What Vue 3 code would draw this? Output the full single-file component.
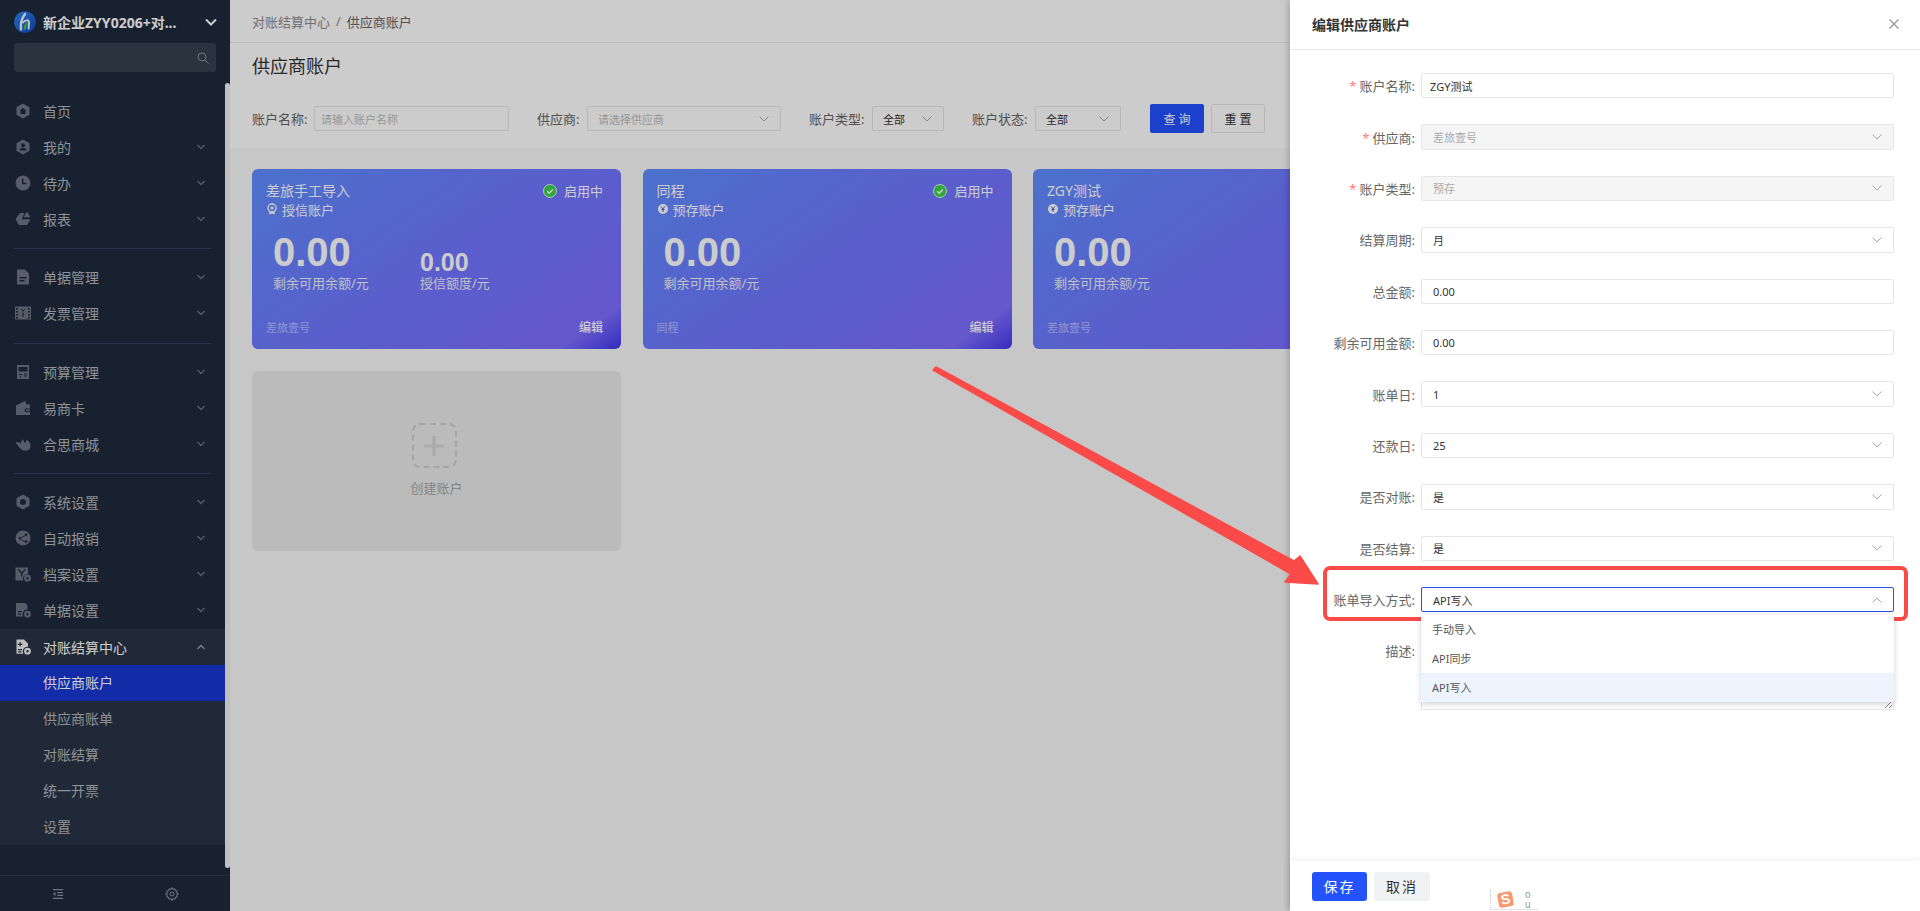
<template>
  <div class="page">
    <aside class="sidebar">
      <div class="brand">
        <svg class="logo" viewBox="0 0 22 22">
          <defs>
            <linearGradient id="logoFill" x1="0" y1="0" x2="1" y2="1">
              <stop offset="0" stop-color="#2f86ea" />
              <stop offset="1" stop-color="#1546c4" />
            </linearGradient>
          </defs>
          <circle cx="11" cy="11" r="10.8" fill="url(#logoFill)" />
          <path d="M11 3C8 7 6 11 7 18.500" fill="none" stroke="#e9f2fb" stroke-width="2.400" stroke-linecap="round" />
          <path d="M9 11.500c2-2.500 5.500-3 6-.5.300 2-.2 4.500-.5 6.500" fill="none" stroke="#e9f2fb" stroke-width="2" stroke-linecap="round" />
          <path d="M10.500 18c.3-2.200 1-4 2.200-5.500" fill="none" stroke="#43c15a" stroke-width="2.200" stroke-linecap="round" />
        </svg>
        <span class="brand-name">新企业ZYY0206+对...</span>
        <svg class="brand-arrow" viewBox="0 0 14 10"><path d="M2 2.500l5 5 5-5" fill="none" stroke="#fff" stroke-width="2" /></svg>
      </div>
      <div class="side-search">
        <svg viewBox="0 0 12 12"><circle cx="5" cy="5" r="4" fill="none" stroke="#8c939c" /><path d="M8 8l3.500 3.500" stroke="#8c939c" /></svg>
      </div>

      <nav class="menu">
        <div v-for="(group, i) in menuGroups" :key="i" class="menu-group">
          <div v-for="item in group" :key="item.name" class="menu-item" :class="{ open: item.open }">
            <svg class="menu-icon" viewBox="0 0 16 16"><path :d="icons[item.icon]" fill-rule="evenodd" /></svg>
            <span class="menu-name">{{ item.name }}</span>
            <svg v-if="item.arrow" class="menu-arrow" viewBox="0 0 10 8">
              <path :d="item.open ? 'M1.500 6l3.500-3.500L8.500 6' : 'M1.500 2l3.500 3.500L8.500 2'" fill="none" stroke-width="1.300" />
            </svg>
          </div>
        </div>
        <div class="submenu">
          <div v-for="(sub, i) in subItems" :key="sub" class="sub-item" :class="{ active: i === 0 }">{{ sub }}</div>
        </div>
      </nav>

      <div class="side-foot">
        <svg viewBox="0 0 14 14"><path d="M1 2h12M6 5.300h7M6 8.700h7M1 12h12" stroke="#8a9097" stroke-width="1.400" fill="none" /><path d="M4 4.800L1 7l3 2.200z" fill="#8a9097" /></svg>
        <svg viewBox="0 0 16 16"><path d="M8 1l1.200 1.500 2-.3.700 1.900 1.900.7-.3 2L15 8l-1.500 1.200.3 2-1.900.7-.7 1.900-2-.3L8 15l-1.200-1.500-2 .3-.7-1.900-1.900-.7.3-2L1 8l1.500-1.200-.3-2 1.900-.7.700-1.900 2 .3z" fill="none" stroke="#8a9097" stroke-width="1.200" /><circle cx="8" cy="8" r="2.200" fill="none" stroke="#8a9097" stroke-width="1.200" /></svg>
      </div>
      <div class="side-thumb"></div>
    </aside>

    <main class="main">
      <div class="crumbs"><span>对账结算中心</span><i>/</i><b>供应商账户</b></div>
      <section class="head">
        <h1>供应商账户</h1>
        <div class="filters">
          <div v-for="f in filters" :key="f.label" class="filter">
            <label :style="{ width: f.labelWidth + 'px' }">{{ f.label }}:</label>
            <div class="fake-input" :class="{ placeholder: f.placeholder, select: f.select }" :style="{ width: f.width + 'px' }">
              <span>{{ f.value }}</span>
              <svg v-if="f.select" class="chev" viewBox="0 0 10 6"><path d="M.5.500L5 5 9.500.500" fill="none" stroke="#aaa" /></svg>
            </div>
          </div>
          <div class="filter-btns">
            <button class="btn-query">查 询</button>
            <button class="btn-reset">重 置</button>
          </div>
        </div>
      </section>
      <section class="cards">
        <div v-for="c in cards" :key="c.title" class="card">
          <div class="card-top">
            <span>{{ c.title }}</span>
            <span class="status">
              <svg viewBox="0 0 14 14"><circle cx="7" cy="7" r="6.500" fill="#3bd24a" stroke="#dff5e2" /><path d="M4.200 7.200l2 2 3.600-3.800" fill="none" stroke="#fff" stroke-width="1.500" /></svg>
              启用中
            </span>
          </div>
          <div class="card-type">
            <svg viewBox="0 0 10 12">
              <template v-if="c.credit">
                <circle cx="5" cy="5" r="4" fill="none" stroke="#fff" stroke-width="1.400" /><circle cx="5" cy="5" r="1.500" fill="#fff" /><path d="M2.500 9l-.5 2.500L5 10.500l3 1L7.500 9" fill="#fff" />
              </template>
              <template v-else>
                <circle cx="5" cy="6" r="5" fill="#fff" /><path d="M3.200 3.500L5 6l1.800-2.500M5 6v3M3.400 6.500h3.200" fill="none" stroke="#4d64cf" />
              </template>
            </svg>
            {{ c.type }}
          </div>
          <div class="metrics">
            <div class="metric">
              <div class="big">0.00</div>
              <div class="metric-label">剩余可用余额/元</div>
            </div>
            <div v-if="c.credit" class="metric second">
              <div class="mid">0.00</div>
              <div class="metric-label">授信额度/元</div>
            </div>
          </div>
          <div class="card-foot">
            <span>{{ c.vendor }}</span>
            <b>编辑</b>
          </div>
        </div>
        <div class="card-add">
          <div class="add-box"><svg viewBox="0 0 24 24"><path d="M12 1v22M1 12h22" stroke="#d6d6d6" stroke-width="3.500" /></svg></div>
          <span>创建账户</span>
        </div>
      </section>
    </main>

    <div class="mask"></div>

    <aside class="drawer">
      <header class="drawer-head">
        <span>编辑供应商账户</span>
        <svg viewBox="0 0 10 10"><path d="M.5.500l9 9M9.500.500l-9 9" stroke="#8f8f8f" stroke-width="1.100" /></svg>
      </header>
      <div class="drawer-body">
        <div v-for="row in formRows" :key="row.label" class="form-row">
          <label><em v-if="row.required">*</em>{{ row.label }}:</label>
          <div class="control" :class="{ disabled: row.disabled, focused: row.open, tight: row.tight }">
            <span>{{ row.value }}</span>
            <svg v-if="!row.plain" class="chev" viewBox="0 0 10 6">
              <path :d="row.open ? 'M.5 5.500L5 1l4.500 4.500' : 'M.5.500L5 5 9.500.500'" fill="none" stroke="#a8a8a8" />
            </svg>
            <ul v-if="row.open" class="dropdown">
              <li v-for="(opt, i) in importOptions" :key="opt" :class="{ picked: i === 2 }">{{ opt }}</li>
            </ul>
          </div>
        </div>
        <div class="form-row area-row">
          <label>描述:</label>
          <div class="area">
            <svg viewBox="0 0 8 8"><path d="M1 8l7-7M5 8l3-3" stroke="#777" stroke-width=".9" /></svg>
          </div>
        </div>
      </div>
      <footer class="drawer-foot">
        <button class="btn-save">保存</button>
        <button class="btn-cancel">取消</button>
        <div class="ime">
          <span class="ime-logo">S</span>
          <span class="ime-tools"><i>o</i><i>u</i></span>
        </div>
      </footer>
    </aside>

    <svg class="annotation" viewBox="0 0 1920 911">
      <polygon points="933,370 936,367 1294,561 1300,556 1318,584 1285,582 1291,574" fill="#fb4b48" stroke="#fb4b48" stroke-width="1.500" stroke-linejoin="round" />
      <rect x="1325" y="568" width="581" height="51" rx="5" fill="none" stroke="#fb4b48" stroke-width="4" />
    </svg>
  </div>
</template>

<script setup>
const hex = 'M8 .5l6.500 3.700v7.600L8 15.500l-6.500-3.700V4.200z'
const gear = 'M12.500 8.800a3.400 3.400 0 1 0 0 6.800 3.400 3.400 0 1 0 0-6.800zM12.500 11a1.200 1.200 0 1 1 0 2.400 1.200 1.200 0 1 1 0-2.400z'

const icons = {
  home: hex + 'M8 5L5.500 6.800V11h5V6.800z',
  me: hex + 'M8 4.300a2 2 0 1 0 0 4 2 2 0 1 0 0-4zM4.500 11.500c0-2 1.500-2.800 3.500-2.800s3.500.8 3.500 2.800z',
  clock: 'M8 .5a7.500 7.500 0 1 0 0 15 7.500 7.500 0 1 0 0-15zM7 3.500h1.500v4.200h3v1.500H7z',
  report: 'M5 2h4.400L6.800 8.300h8.700L12 14H4L.5 8zM11 1.500h1.500l3 4.800H8.800z',
  doc: 'M2 .5h8l4 4v11H2zM4.500 8h7v1.500h-7zM4.500 11h5v1.500h-5z',
  invoice: 'M0 1.500h16v13H0zM1 3v1.500h2V3zM1 6v1.500h2V6zM1 9v1.500h2V9zM1 12v1.500h2V12zM13 3v1.500h2V3zM13 6v1.500h2V6zM13 9v1.500h2V9zM13 12v1.500h2V12zM5.800 4L8 7l2.200-3h-1L8 5.600 6.800 4zM7.400 7.500V12h1.200V7.500z',
  calc: 'M2 1h12v14H2zM3.500 3v4.500h9V3zM4 10h3v1H4zM9 9.500h3v1H9zM9 11.500h3v1H9zM5 12h1v1.500H5z',
  wallet: 'M1 5.500L10 1l1.500 3.500H15v4h-4a1.800 1.800 0 0 0 0 3.500h4V15H1zM11 9.500h4V11h-4z',
  bird: 'M.5 6c2 0 3.500.3 5 1.500C6 5.500 7 4 8.500 3.500 8.300 4.800 9 6 10 7c.8-.8 1.400-2 1.600-3.300 2.200 1.500 4 3.400 4 6 0 3-2.500 5-5 5C6 14.700 3 10 .5 6z',
  nut: hex + 'M8 5a3 3 0 1 0 0 6 3 3 0 1 0 0-6z',
  auto: 'M8 .5a7.500 7.500 0 1 0 0 15 7.500 7.500 0 1 0 0-15zM11 3.400a1.400 1.400 0 1 0 0 2.800 1.400 1.400 0 1 0 0-2.800zM5 6.900a1.400 1.400 0 1 0 0 2.800 1.400 1.400 0 1 0 0-2.800zM11 10.200a1.400 1.400 0 1 0 0 2.800 1.400 1.400 0 1 0 0-2.800zM6.300 7.200l3.500-2 .4.800-3.500 2zM6.300 9.400l3.500 1.800-.4.800-3.500-1.800z',
  archive: 'M.5 1.500h12.500v6.700a4.800 4.800 0 0 0-5 6.300H.5zM2.500 3l3.500 4.500V11l1.500-1V7.500L11 3H9.500L6.800 6.300 4 3z' + gear,
  docset: 'M1 1h9l2.500 2.500v4a4.800 4.800 0 0 0-4.500 7H1zM3 9h4v1.300H3zM3 11.500h3v1.300H3z' + gear,
  settle: 'M1.500.5h7.500l4 4v3.300a4.800 4.800 0 0 0-4.800 7H1.500zM4.500 3v1.700H2.800v1.200h1.700v1.700h1.200V5.900h1.700V4.700H5.700V3zM3 10h4v1.200H3zM3 12.300h3.500v1.200H3z' + gear
}

const menuGroups = [
  [
    { name: '首页', icon: 'home' },
    { name: '我的', icon: 'me', arrow: true },
    { name: '待办', icon: 'clock', arrow: true },
    { name: '报表', icon: 'report', arrow: true }
  ],
  [
    { name: '单据管理', icon: 'doc', arrow: true },
    { name: '发票管理', icon: 'invoice', arrow: true }
  ],
  [
    { name: '预算管理', icon: 'calc', arrow: true },
    { name: '易商卡', icon: 'wallet', arrow: true },
    { name: '合思商城', icon: 'bird', arrow: true }
  ],
  [
    { name: '系统设置', icon: 'nut', arrow: true },
    { name: '自动报销', icon: 'auto', arrow: true },
    { name: '档案设置', icon: 'archive', arrow: true },
    { name: '单据设置', icon: 'docset', arrow: true },
    { name: '对账结算中心', icon: 'settle', arrow: true, open: true }
  ]
]

const subItems = ['供应商账户', '供应商账单', '对账结算', '统一开票', '设置']

const filters = [
  { label: '账户名称', labelWidth: 56, width: 195, value: '请输入账户名称', placeholder: true },
  { label: '供应商', labelWidth: 44, width: 194, value: '请选择供应商', placeholder: true, select: true },
  { label: '账户类型', labelWidth: 57, width: 72, value: '全部', select: true },
  { label: '账户状态', labelWidth: 57, width: 86, value: '全部', select: true }
]

const cards = [
  { title: '差旅手工导入', type: '授信账户', vendor: '差旅壹号', credit: true },
  { title: '同程', type: '预存账户', vendor: '同程' },
  { title: 'ZGY测试', type: '预存账户', vendor: '差旅壹号' }
]

const formRows = [
  { label: '账户名称', value: 'ZGY测试', required: true, plain: true, tight: true },
  { label: '供应商', value: '差旅壹号', required: true, disabled: true },
  { label: '账户类型', value: '预存', required: true, disabled: true },
  { label: '结算周期', value: '月' },
  { label: '总金额', value: '0.00', plain: true },
  { label: '剩余可用金额', value: '0.00', plain: true },
  { label: '账单日', value: '1' },
  { label: '还款日', value: '25' },
  { label: '是否对账', value: '是' },
  { label: '是否结算', value: '是' },
  { label: '账单导入方式', value: 'API写入', open: true }
]

const importOptions = ['手动导入', 'API同步', 'API写入']
</script>

<style scoped>
.page {
  position: relative;
  display: flex;
  width: 1920px;
  height: 911px;
  overflow: hidden;
  background: #f9f9f9;
  font-family: "Noto Sans", "Noto Sans CJK SC", sans-serif;
  font-size: 13px;
  color: #333;
}

.sidebar {
  position: relative;
  flex: 0 0 230px;
  display: flex;
  flex-direction: column;
  background: #1d2a3c;
  color: #b2b7be;
}

.brand {
  display: flex;
  align-items: center;
  height: 43px;
  padding-left: 14px;
}
.logo {
  width: 22px;
  height: 22px;
  margin-right: 7px;
}
.brand-name {
  font-size: 14px;
  font-weight: 700;
  color: #fff;
  white-space: nowrap;
}
.brand-arrow {
  width: 14px;
  height: 10px;
  margin-left: auto;
  margin-right: 12px;
}

.side-search {
  display: flex;
  align-items: center;
  justify-content: flex-end;
  width: 202px;
  height: 29px;
  margin-left: 14px;
  padding-right: 7px;
  box-sizing: border-box;
  background: #35424f;
  border-radius: 3px;
}
.side-search svg {
  width: 12px;
  height: 12px;
}

.menu {
  margin-top: 21px;
  flex: 1;
}
.menu-group + .menu-group {
  margin-top: 10px;
  padding-top: 12px;
  position: relative;
}
.menu-group:nth-child(3) {
  margin-top: 11px;
}
.menu-group + .menu-group::before {
  content: "";
  position: absolute;
  top: 1px;
  left: 14px;
  width: 197px;
  height: 1px;
  background: #34435a;
}
.menu-item {
  display: flex;
  align-items: center;
  height: 36px;
  padding-left: 15px;
  padding-right: 24px;
  font-size: 14px;
}
.menu-icon {
  flex: none;
  width: 16px;
  height: 16px;
  margin-right: 12px;
  fill: #6c7582;
}
.menu-arrow {
  width: 10px;
  height: 8px;
  margin-left: auto;
  stroke: #6c7582;
}
.menu-item.open {
  margin-top: 1px;
  background: #273445;
  color: #fff;
}
.menu-item.open .menu-icon {
  fill: #f0f0f0;
}
.menu-item.open .menu-arrow {
  stroke: #a0a6ae;
}

.submenu {
  background: #273445;
}
.sub-item {
  height: 36px;
  padding-left: 43px;
  line-height: 36px;
  font-size: 14px;
}
.sub-item.active {
  background: #1737d3;
  color: #fff;
}

.side-foot {
  display: flex;
  align-items: center;
  justify-content: space-between;
  height: 35px;
  padding: 0 51px 0 52px;
  border-top: 1px solid #2d3a4d;
}
.side-foot svg:first-child {
  width: 12px;
  height: 12px;
}
.side-foot svg:last-child {
  width: 14px;
  height: 14px;
}
.side-thumb {
  position: absolute;
  top: 83px;
  right: 0;
  width: 5px;
  height: 785px;
  border-radius: 3px;
  background: #f1f1f1;
}

.main {
  flex: 1;
  display: flex;
  flex-direction: column;
  min-width: 0;
}
.crumbs {
  display: flex;
  align-items: center;
  height: 42px;
  padding-left: 22px;
  background: #fff;
  border-bottom: 1px solid #eee;
  color: #8c8c8c;
}
.crumbs i {
  margin: 0 6px;
  font-style: normal;
}
.crumbs b {
  font-weight: 400;
  color: #666;
}
.head {
  padding: 11px 22px 15px;
  background: #fff;
}
.head h1 {
  margin: 0;
  font-size: 18px;
  font-weight: 400;
  line-height: 24px;
  color: #333;
}
.filters {
  display: flex;
  align-items: center;
  gap: 28px;
  height: 29px;
  margin-top: 26px;
}
.filter {
  display: flex;
  align-items: center;
  gap: 6px;
}
.filter label {
  white-space: nowrap;
  color: #666;
}
.fake-input {
  position: relative;
  display: flex;
  align-items: center;
  height: 25px;
  padding: 0 6px;
  box-sizing: border-box;
  border: 1px solid #e6e6e6;
  border-radius: 2px;
  font-size: 11px;
  color: #333;
  background: #fff;
}
.fake-input.select {
  padding: 0 10px;
}
.fake-input.placeholder {
  color: #bdbdbd;
}
.chev {
  position: absolute;
  top: 50%;
  right: 11px;
  width: 10px;
  height: 6px;
  margin-top: -3px;
}
.filter-btns {
  display: flex;
  gap: 7px;
  margin-left: 1px;
}
.filter-btns button {
  width: 54px;
  height: 29px;
  padding: 0;
  border-radius: 2px;
  font-family: inherit;
  font-size: 12px;
}
.btn-query {
  border: 0;
  background: #2350ff;
  color: #fff;
}
.btn-reset {
  border: 1px solid #e6e6e6;
  background: #fff;
  color: #333;
}

.cards {
  display: grid;
  grid-template-columns: repeat(3, 369px);
  grid-auto-rows: 180px;
  column-gap: 21.500px;
  row-gap: 22px;
  padding: 21px 22px;
}
.card {
  display: flex;
  flex-direction: column;
  padding: 12px 18px 14px 14px;
  box-sizing: border-box;
  border-radius: 6px;
  background: linear-gradient(145deg, #5f8eff 0%, #7077ff 50%, #7e6eff 90%, #4038ee 100%);
  color: #fff;
}
.card-top {
  display: flex;
  justify-content: space-between;
  line-height: 20px;
  font-size: 14px;
}
.status {
  display: flex;
  align-items: center;
  gap: 7px;
  font-size: 13px;
}
.status svg {
  width: 14px;
  height: 14px;
}
.card-type {
  display: flex;
  align-items: center;
  gap: 5px;
  height: 18px;
  margin-top: -1px;
  padding-left: 1px;
}
.card-type svg {
  width: 10px;
  height: 12px;
}
.metrics {
  display: flex;
  margin-top: 13px;
  padding-left: 7px;
}
.metric {
  display: flex;
  flex-direction: column;
  justify-content: flex-end;
  width: 147px;
}
.big {
  font-family: "Liberation Sans", sans-serif;
  font-size: 40px;
  font-weight: 700;
  line-height: 42px;
}
.mid {
  margin-bottom: -1px;
  font-family: "Liberation Sans", sans-serif;
  font-size: 25px;
  font-weight: 700;
  line-height: 24px;
}
.metric-label {
  line-height: 20px;
  color: #eef0fb;
}
.card-foot {
  display: flex;
  justify-content: space-between;
  align-items: center;
  height: 16px;
  margin-top: auto;
  font-size: 11px;
  color: rgba(255, 255, 255, 0.5);
}
.card-foot b {
  font-size: 12px;
  font-weight: 500;
  color: #fff;
}
.card-add {
  display: flex;
  flex-direction: column;
  align-items: center;
  padding-top: 52px;
  box-sizing: border-box;
  border-radius: 6px;
  background: #eaeaea;
  color: #a8a8a8;
}
.add-box {
  display: flex;
  align-items: center;
  justify-content: center;
  width: 45px;
  height: 45px;
  margin-right: 5px;
  box-sizing: border-box;
  border: 2px dashed #cfcfcf;
  border-radius: 8px;
}
.add-box svg {
  width: 22px;
  height: 22px;
}
.card-add span {
  margin-top: 10px;
  line-height: 20px;
}

.mask {
  position: absolute;
  inset: 0;
  background: rgba(0, 0, 0, 0.2);
}

.drawer {
  position: absolute;
  top: 0;
  right: 0;
  bottom: 0;
  display: flex;
  flex-direction: column;
  width: 630px;
  background: #fff;
  box-shadow: -2px 0 6px rgba(0, 0, 0, 0.2);
}
.drawer-head {
  display: flex;
  align-items: center;
  justify-content: space-between;
  flex: none;
  height: 50px;
  padding: 0 21px 1px 22px;
  box-sizing: border-box;
  border-bottom: 1px solid #e8e8e8;
  font-size: 14px;
  font-weight: 700;
  color: #333;
}
.drawer-head svg {
  width: 10px;
  height: 10px;
}
.drawer-body {
  flex: 1;
  display: flex;
  flex-direction: column;
  gap: 26px;
  padding: 23px 26px 0 0;
}
.form-row {
  display: flex;
  align-items: center;
  gap: 6px;
  height: 25.400px;
}
.form-row label {
  flex: none;
  width: 125px;
  text-align: right;
  color: #666;
  white-space: nowrap;
}
.form-row em {
  margin-right: 3px;
  font-style: normal;
  color: #ff7a7a;
}
.control {
  position: relative;
  flex: 1;
  display: flex;
  align-items: center;
  height: 100%;
  padding-left: 11px;
  box-sizing: border-box;
  border: 1px solid #e6e6e6;
  border-radius: 2px;
  font-size: 11px;
  color: #333;
}
.control.tight {
  padding-left: 8px;
}
.control.disabled {
  background: #f5f5f5;
  color: #aaa;
}
.control.focused {
  border-color: #2350e8;
}
.dropdown {
  position: absolute;
  top: 27px;
  left: -1px;
  right: -1px;
  z-index: 2;
  margin: 0;
  padding: 0;
  list-style: none;
  background: #fff;
  box-shadow: 0 2px 6px rgba(0, 0, 0, 0.18);
}
.dropdown li {
  height: 29px;
  padding-left: 11px;
  line-height: 29px;
  color: #555;
}
.dropdown li.picked {
  background: #eef4fd;
}
.area-row {
  align-items: flex-start;
  height: 72px;
}
.area-row label {
  margin-top: 3px;
}
.area {
  position: relative;
  flex: 1;
  height: 100%;
  box-sizing: border-box;
  border: 1px solid #e6e6e6;
}
.area svg {
  position: absolute;
  right: 1px;
  bottom: 1px;
  width: 8px;
  height: 8px;
}

.drawer-foot {
  position: relative;
  flex: none;
  display: flex;
  align-items: center;
  gap: 7px;
  height: 50px;
  padding-left: 22px;
  box-sizing: border-box;
  box-shadow: 0 -3px 6px rgba(0, 0, 0, 0.05);
}
.drawer-foot button {
  height: 29px;
  padding: 0;
  border: 0;
  border-radius: 3px;
  font-family: inherit;
  font-size: 14px;
  letter-spacing: 2px;
}
.btn-save {
  width: 55px;
  background: #2452fb;
  color: #fff;
}
.btn-cancel {
  width: 56px;
  background: #f1f2f4;
  color: #333;
}
.ime {
  position: absolute;
  left: 200px;
  top: 29px;
  display: flex;
  align-items: flex-start;
  gap: 12px;
  width: 48px;
  height: 20px;
  padding-left: 7px;
  box-sizing: border-box;
  border-left: 1px dotted #ccc;
  border-bottom: 1px solid #e4e4e4;
}
.ime-logo {
  flex: none;
  width: 15px;
  height: 15px;
  margin-top: 2px;
  border-radius: 3px;
  background: #f79a72;
  color: #fff;
  font: 700 14px/15px "Liberation Sans", sans-serif;
  text-align: center;
  transform: rotate(-10deg);
}
.ime-tools {
  display: flex;
  flex-direction: column;
  font: 10px/10px "Liberation Sans", sans-serif;
  color: #8c9aa8;
}
.ime-tools i {
  font-style: normal;
}

.annotation {
  position: absolute;
  inset: 0;
  width: 1920px;
  height: 911px;
  pointer-events: none;
}
</style>
